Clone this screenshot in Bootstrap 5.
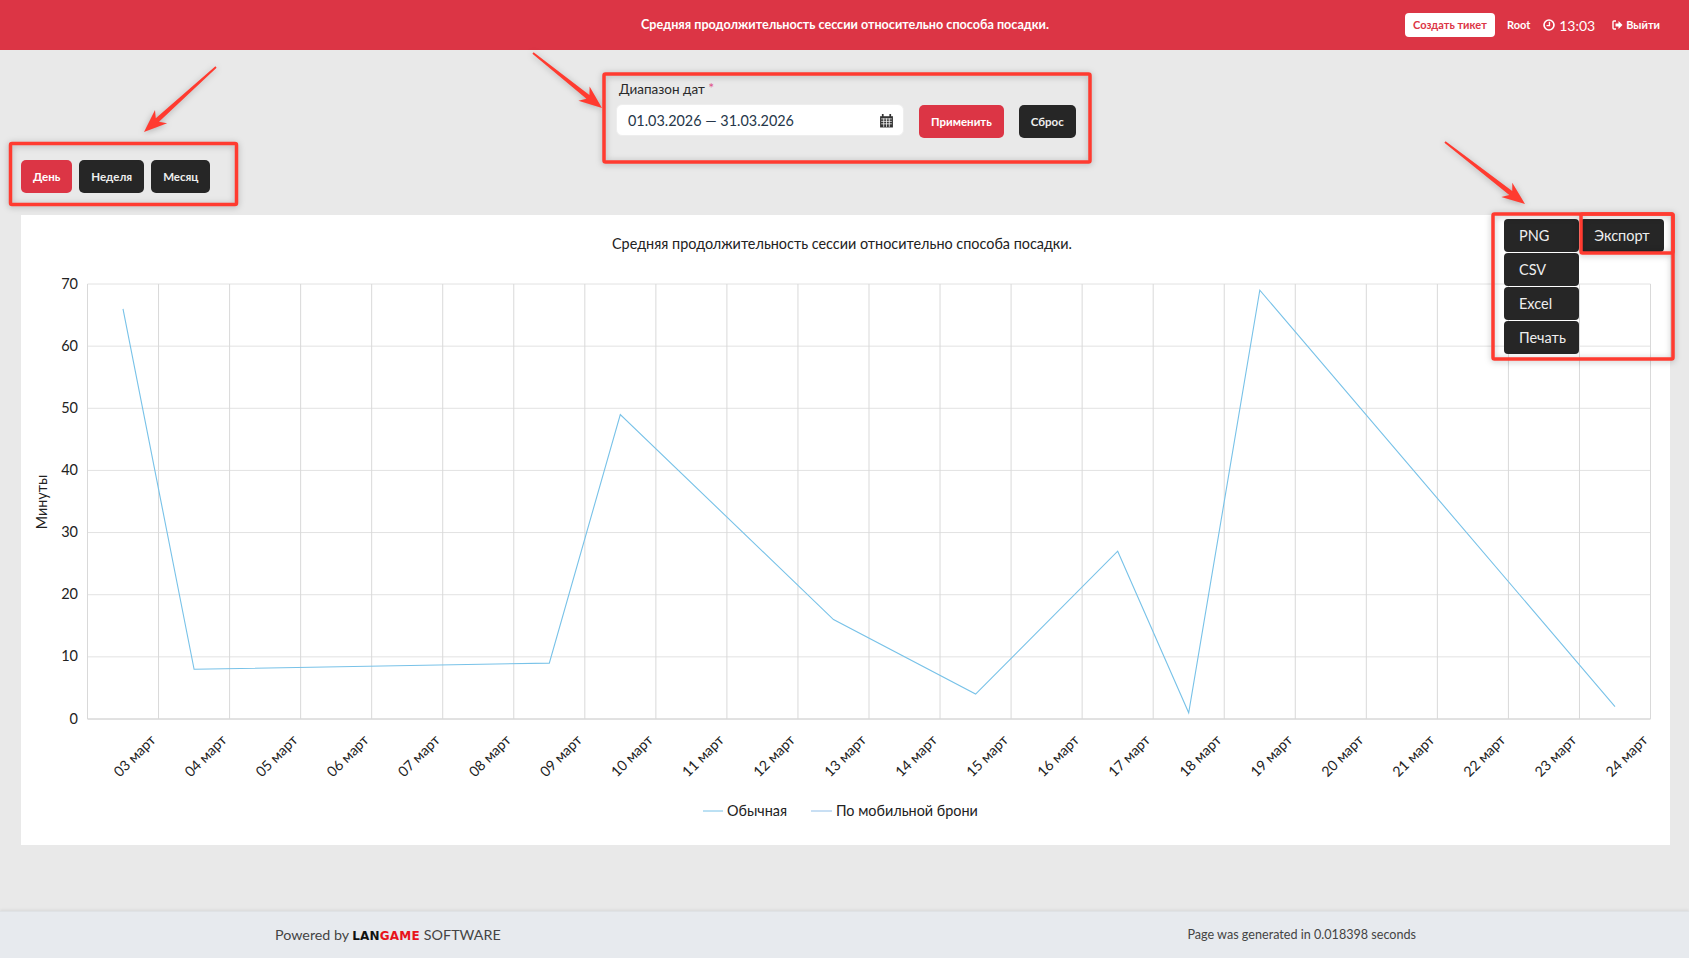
<!DOCTYPE html>
<html lang="ru">
<head>
  <meta charset="UTF-8" />
  <title>Средняя продолжительность сессии</title>
  <meta name="viewport" content="width=device-width, initial-scale=1" />
  <link href="https://cdn.jsdelivr.net/npm/bootstrap@5.3.3/dist/css/bootstrap.min.css" rel="stylesheet" />
  <style>
    html, body { height: 100%; }
    body {
      background: #e9e9e9;
      font-family: Lato, "Open Sans", sans-serif;
      color: #212529;
      position: relative;
      overflow: hidden;
    }
    .top-bar {
      height: 50px;
      background: #dc3545;
      color: #fff;
      padding-right: 29px;
    }
    .top-title { font-size: 12.6px; font-weight: 700; margin-left: 641px; width: 408px; text-align: center; white-space: nowrap; }
    .ticket-btn {
      background: #fff; color: #dc3545; font-size: 11px; font-weight: 700;
      height: 24px; width: 90px; padding: 0; border-radius: 4px; border: 0;
      margin-left: auto; margin-right: 12px;
    }
    .user-name { font-size: 11px; font-weight: 700; margin-right: 13px; }
    .clock-box { font-size: 14px; margin-right: 17px; gap: 4px; }
    .logout-box { font-size: 11px; font-weight: 700; gap: 3px; }

    .tool-row { height: 165px; padding-left: 21px; }
    .period-group { padding-top: 110px; gap: 7px; width: 595px; }
    .act-btn {
      height: 33px; padding: 1px 12px 0; font-size: 11.5px; font-weight: 700;
      border-radius: 5px; border: 0; color: #fff; line-height: 32px;
    }
    .act-dark { background: #262626; color: #eee; }
    .act-dark:hover { background: #262626; color: #eee; }
    .act-red { background: #dc3545; color: #fff; }
    .act-red:hover { background: #dc3545; color: #fff; }
    .range-label { font-size: 13.5px; line-height: 17px; margin: 31px 0 6px 3px; color: #2a2a2a; }
    .range-label span { color: #e0558a; font-size: 14px; line-height: 14px; vertical-align: top; }
    .range-input {
      width: 288px; height: 32px; background: #fff; border-radius: 6px; border: 1px solid #eee;
      padding: 1px 9px 0 11px; font-size: 14.4px; color: #26374a;
    }
    .range-btns { margin: 55px 0 0 15px; gap: 15px; }

    .chart-card { background: #fff; margin: 0 19px 0 21px; height: 630px; position: relative; }
    .chart-card svg { display: block; }
    .chart-card text { font-family: Lato, "Open Sans", sans-serif; fill: #222; }
    .export-btn {
      position: absolute; top: 4px; right: 6px; width: 84px; height: 33px; padding: 0;
      background: #262626; color: #eee; border: 0; border-radius: 4px; font-size: 14.5px;
    }
    .export-menu { position: absolute; top: 4px; left: 1483px; width: 75px; gap: 1px; }
    .export-item {
      height: 33px; line-height: 33px; padding: 0 0 0 15px; text-align: left;
      background: #262626; color: #eee; border: 0; border-radius: 4px; font-size: 14.5px;
    }

    .page-foot {
      height: 47px; background: #e7eaee; border-top: 1px solid #dfe2e5; margin-top: auto;
      box-shadow: 0 -1px 3px rgba(0,0,0,.08);
      padding: 0 273px 0 275px; color: #444; font-size: 14.3px;
    }
    .brand-lan, .brand-game { font-family: "DejaVu Sans", sans-serif; font-weight: 700; font-size: 12px; letter-spacing: .2px; }
    .brand-lan { color: #111; margin-left: 3px; }
    .brand-game { color: #e8141c; margin-right: 4px; }
    .gen-time { font-size: 12.6px; }
    .mark-layer { position: absolute; left: 0; top: 0; pointer-events: none; filter: drop-shadow(0 1px 3px rgba(0,0,0,.25)); }
  </style>
</head>
<body class="d-flex flex-column">

  <header class="top-bar d-flex align-items-center">
    <div class="top-title">Средняя продолжительность сессии относительно способа посадки.</div>
    <button class="btn ticket-btn">Создать тикет</button>
    <span class="user-name">Root</span>
    <span class="clock-box d-flex align-items-center">
      <svg width="12" height="12" viewBox="0 0 13 13"><circle cx="6.5" cy="6.5" r="5.4" fill="none" stroke="#fff" stroke-width="1.8"/><path d="M7 3v4.2H3.8" fill="none" stroke="#fff" stroke-width="1.5"/></svg>
      13:03
    </span>
    <span class="logout-box d-flex align-items-center">
      <svg width="11" height="10" viewBox="0 0 11 10"><path d="M4 1H2Q1 1 1 2v6q0 1 1 1h2" fill="none" stroke="#fff" stroke-width="1.4"/><path d="M3.5 3.5H6.5V1L10.5 5 6.5 9V6.5H3.5z" fill="#fff"/></svg>
      Выйти
    </span>
  </header>

  <main>
    <div class="tool-row d-flex">
      <div class="period-group d-flex align-items-start">
        <button class="btn act-btn act-red">День</button>
        <button class="btn act-btn act-dark">Неделя</button>
        <button class="btn act-btn act-dark">Месяц</button>
      </div>
      <div>
        <div class="range-label">Диапазон дат <span>*</span></div>
        <div class="range-input d-flex align-items-center justify-content-between">
          01.03.2026 — 31.03.2026
          <svg width="15" height="15" viewBox="0 0 14 14"><path d="M1 3h12v10.5H1z" fill="#333"/><path d="M2 5.5h10M2 7.8h10M2 10.1h10M4.4 5v8M7 5v8M9.6 5v8" stroke="#fff" stroke-width=".7"/><path d="M3.5 1v3M10.5 1v3" stroke="#333" stroke-width="1.6"/></svg>
        </div>
      </div>
      <div class="range-btns d-flex align-items-start">
        <button class="btn act-btn act-red">Применить</button>
        <button class="btn act-btn act-dark">Сброс</button>
      </div>
    </div>

    <div class="chart-card">
      <svg id="chart" width="1649" height="630" viewBox="0 0 1649 630"></svg>
      <button class="btn export-btn">Экспорт</button>
      <div class="export-menu d-flex flex-column">
        <button class="btn export-item">PNG</button>
        <button class="btn export-item">CSV</button>
        <button class="btn export-item">Excel</button>
        <button class="btn export-item">Печать</button>
      </div>
    </div>
  </main>

  <footer class="page-foot d-flex align-items-center justify-content-between">
    <div>Powered by<span class="brand-lan">LAN</span><span class="brand-game">GAME</span>SOFTWARE</div>
    <div class="gen-time">Page was generated in 0.018398 seconds</div>
  </footer>

  <svg class="mark-layer" id="marks" width="1689" height="958" viewBox="0 0 1689 958"></svg>

  <script>
    const NS = "http://www.w3.org/2000/svg";
    const lineColor = "#78c2e8";

    function add(parent, tag, attrs, text) {
      const el = document.createElementNS(NS, tag);
      Object.keys(attrs).forEach(k => el.setAttribute(k, attrs[k]));
      if (text !== undefined) el.textContent = text;
      parent.appendChild(el);
      return el;
    }

    // chart: coordinates are relative to the white card
    function drawChart() {
      const svg = document.getElementById("chart");
      const left = 66.5, right = 1629.5, top = 69, bottom = 504;
      const step = (right - left) / 22;
      const unit = (bottom - top) / 70;

      add(svg, "text", { x: 821, y: 34, "text-anchor": "middle", "font-size": 14.4 }, "Средняя продолжительность сессии относительно способа посадки.");

      for (let v = 0; v <= 70; v += 10) {
        const y = bottom - v * unit;
        add(svg, "line", { x1: left, x2: right, y1: y, y2: y, stroke: v === 0 ? "#c4c4c4" : "#e2e2e2" });
        add(svg, "text", { x: 57, y: y + 4.5, "text-anchor": "end", "font-size": 14.5 }, v);
      }
      for (let i = 0; i <= 22; i++) {
        const x = left + i * step;
        add(svg, "line", { x1: x, x2: x, y1: top, y2: bottom, stroke: "#d9d9d9" });
      }
      for (let i = 0; i < 22; i++) {
        const x = left + (i + 1) * step;
        const day = String(i + 3).padStart(2, "0");
        add(svg, "text", { x: x - 2, y: 526, "text-anchor": "end", "font-size": 14.2, transform: `rotate(-45 ${x - 2} 526)` }, day + " март");
      }

      const points = [[0, 66], [1, 8], [6, 9], [7, 49], [10, 16], [12, 4], [14, 27], [15, 1], [16, 69], [21, 2]];
      const path = points.map(p => (left + (p[0] + 0.5) * step).toFixed(1) + "," + (bottom - p[1] * unit).toFixed(1)).join(" ");
      add(svg, "polyline", { points: path, fill: "none", stroke: lineColor, "stroke-width": 1.1 });

      add(svg, "text", { x: 26, y: 287, "text-anchor": "middle", "font-size": 14.4, transform: "rotate(-90 26 287)" }, "Минуты");

      add(svg, "line", { x1: 682, x2: 702, y1: 596, y2: 596, stroke: lineColor });
      add(svg, "text", { x: 706, y: 601, "font-size": 14.4 }, "Обычная");
      add(svg, "line", { x1: 790, x2: 811, y1: 596, y2: 596, stroke: "#92bfe8" });
      add(svg, "text", { x: 815, y: 601, "font-size": 14.4 }, "По мобильной брони");
    }

    // red annotation marks drawn over the screenshot
    function arrow(svg, x1, y1, x2, y2) {
      const len = Math.hypot(x2 - x1, y2 - y1);
      const ux = (x2 - x1) / len, uy = (y2 - y1) / len;
      const nx = -uy, ny = ux;
      const at = (along, side) => (x1 + ux * along + nx * side).toFixed(1) + "," + (y1 + uy * along + ny * side).toFixed(1);
      const pts = [at(0, -0.9), at(len - 18, -2.4), at(len - 23, -9), at(len, 0), at(len - 23, 9), at(len - 18, 2.4), at(0, 0.9)];
      add(svg, "polygon", { points: pts.join(" "), fill: "#ff3b30" });
    }

    function drawMarks() {
      const svg = document.getElementById("marks");
      const boxes = [[10.5, 143.5, 226, 61], [604, 74, 486, 88], [1493, 214, 180, 145], [1581, 214, 92, 39]];
      boxes.forEach(b => add(svg, "rect", { x: b[0], y: b[1], width: b[2], height: b[3], rx: 1.5, fill: "none", stroke: "#ff3b30", "stroke-width": 3.5 }));
      arrow(svg, 216, 67, 144, 132);
      arrow(svg, 533, 53, 602, 108);
      arrow(svg, 1445, 142, 1525, 204);
    }

    drawChart();
    drawMarks();
  </script>
  <script src="https://cdn.jsdelivr.net/npm/bootstrap@5.3.3/dist/js/bootstrap.bundle.min.js"></script>
</body>
</html>
